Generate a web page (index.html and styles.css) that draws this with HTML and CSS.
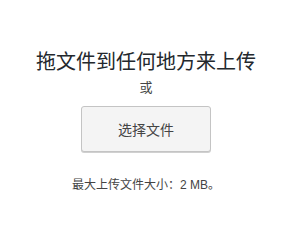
FILE: index.html
```html
<!DOCTYPE html>
<html lang="zh-CN">
<head>
    <meta charset="UTF-8">
    <meta name="viewport" content="width=device-width, initial-scale=1.0">
    <title>上传文件</title>
    <link rel="stylesheet" href="styles.css">
</head>
<body>
    <div class="drop-area">
        <div class="drop-inside">
            <p class="drop-instructions">拖文件到任何地方来上传</p>
            <p class="drop-or">或</p>
            <button type="button" class="browser-button">选择文件</button>
        </div>
        <p class="max-upload-size">最大上传文件大小：2 MB。</p>
    </div>
</body>
</html>
```

FILE: styles.css
```css
body {
    margin: 0;
    background-color: #fff;
    font-family: "Liberation Sans", "Noto Sans CJK SC", sans-serif;
    color: #32373c;
}
.drop-area {
    width: 292px;
    padding-top: 47px;
    text-align: center;
}
.drop-inside {
    margin: 0;
}
.drop-instructions {
    margin: 0;
    font-size: 20px;
    line-height: 30px;
    color: #23282d;
}
.drop-or {
    margin: 1px 0 0;
    font-size: 13px;
    line-height: 20px;
    color: #444;
}
.browser-button {
    margin-top: 8px;
    width: 130px;
    height: 46px;
    background-color: #f4f4f4;
    border: 1px solid #c4c4c4;
    border-radius: 3px;
    box-shadow: 0 1px 0 #d0d0d0;
    font-family: "Liberation Sans", "Noto Sans CJK SC", sans-serif;
    font-size: 14px;
    color: #444;
    cursor: pointer;
}
.max-upload-size {
    margin: 24px 0 0;
    font-size: 12px;
    line-height: 18px;
    color: #444;
}
```
